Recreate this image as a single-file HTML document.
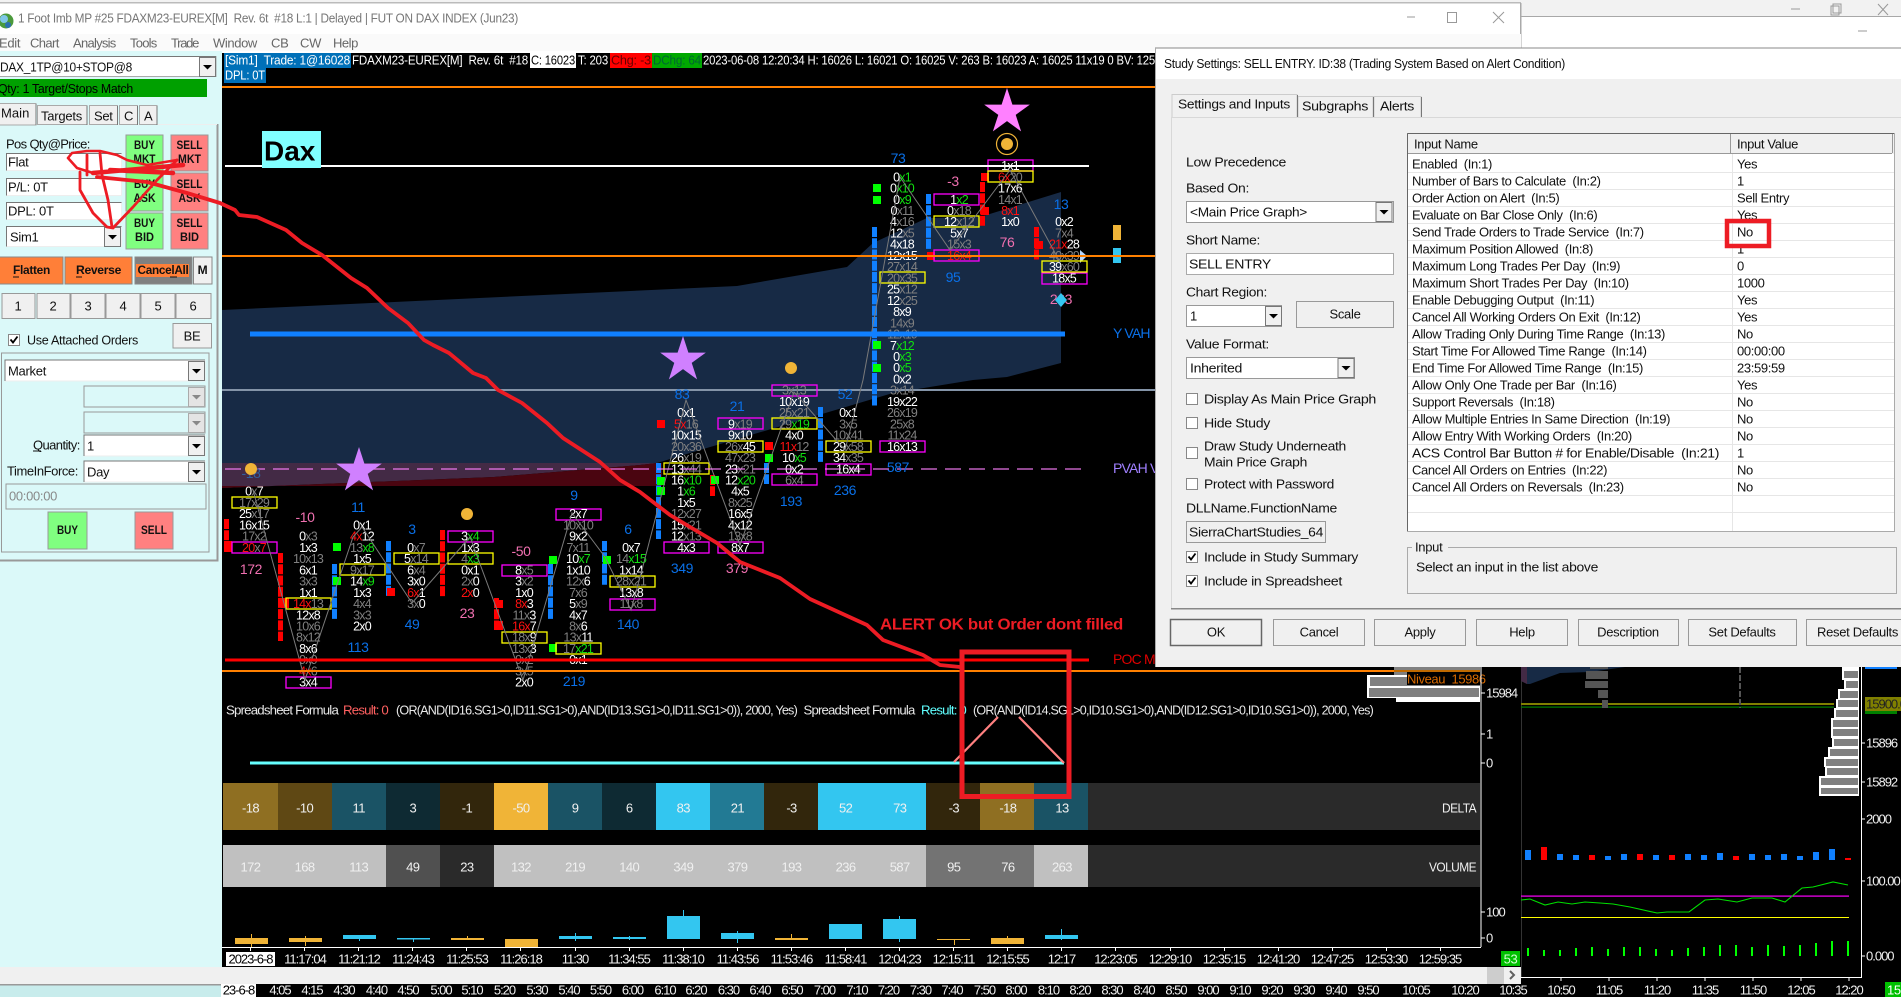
<!DOCTYPE html>
<html><head><meta charset="utf-8"><title>Study Settings</title>
<style>
html,body{margin:0;padding:0;background:#000;width:1901px;height:997px;overflow:hidden}
svg{position:absolute;left:0;top:0;display:block}
text{font-family:"Liberation Sans",Arial,sans-serif;font-size:13px;dominant-baseline:central;fill:#111;letter-spacing:-.3px}
.m{fill:#666}
.c{text-anchor:middle}
.h text{font-size:13px;fill:#fff;letter-spacing:-.2px}
.f text{font-size:12.5px;letter-spacing:-.8px;text-anchor:middle;fill:#fff}
.f text.g,.f tspan.g{fill:#808080}
.f text.r,.f tspan.r{fill:#ff1010}
.f text.n,.f tspan.n{fill:#10e010}
.f tspan.w{fill:#fff}
.b text{font-size:14px;letter-spacing:-.4px;text-anchor:middle;fill:#0a70e8}
.b text.p{fill:#f070b0}
.d text{font-size:13px;letter-spacing:-.6px;text-anchor:middle;fill:#f0f0f0}
.t text{font-size:13px;letter-spacing:-1px;text-anchor:middle;fill:#f0f0f0}
.s text{font-size:13px;letter-spacing:-.8px;fill:#e8e8e8}
.rw text{font-size:13px;letter-spacing:-.35px;fill:#111}
.bb text{font-size:11.5px;font-weight:bold;text-anchor:middle;letter-spacing:0}
</style></head>
<body>
<svg width="1901" height="997" viewBox="0 0 1901 997" xmlns="http://www.w3.org/2000/svg">
<defs>
<g id="ar"><rect x=".5" y=".5" width="16" height="19" fill="#f0f0f0" stroke="#777"/><path d="M4 8h9l-4.500 4.500z" fill="#000"/></g>
<g id="ad"><rect x=".5" y=".5" width="16" height="19" fill="#e4e4e4" stroke="#aaa"/><path d="M4 8h9l-4.500 4.500z" fill="#888"/></g>
<polygon id="st" points="0,-1 .225,-.309 .951,-.309 .363,.118 .588,.809 0,.382 -.588,.809 -.363,.118 -.951,-.309 -.225,-.309"/>
<g id="cb"><rect x=".5" y=".5" width="11" height="11" fill="#fff" stroke="#888"/></g>
<g id="cc"><rect x=".5" y=".5" width="11" height="11" fill="#fff" stroke="#888"/><path d="M2.500 5.500l2.500 3 4.500-6" stroke="#000" stroke-width="1.800" fill="none"/></g>
</defs>

<!-- page base -->
<rect width="1901" height="997" fill="#fff"/>
<rect y="0" width="1901" height="16" fill="#f2f2f2"/>
<rect y="16" x="1521" width="380" height="1" fill="#a8a8a8"/>
<path d="M1791 9h9" stroke="#999"/>
<rect x="1831" y="6" width="8" height="9" fill="none" stroke="#999"/><rect x="1833" y="4" width="8" height="9" fill="none" stroke="#999"/>
<path d="M1878 4l10 11M1888 4l-10 11" stroke="#999"/>
<path d="M1858 31h9" stroke="#999"/>

<!-- main window title -->
<rect x="0" y="3" width="1521" height="48" fill="#fff"/>
<rect x="0" y="2" width="1521" height="1.500" fill="#bbb"/>
<rect x="1520" y="3" width="1.500" height="46" fill="#aaa"/>
<rect y="34" width="1521" height="17" fill="#fafafa"/>
<circle cx="6" cy="21" r="7.500" fill="#4b9a3c"/><circle cx="4" cy="19" r="4" fill="#7fc7e8"/><circle cx="8" cy="25" r="3" fill="#2b6fb0"/>
<text x="18" y="18" class="m" textLength="500" lengthAdjust="spacingAndGlyphs" style="fill:#777">1 Foot Imb MP #25 FDAXM23-EUREX[M]&nbsp; Rev. 6t&nbsp; #18 L:1 | Delayed | FUT ON DAX INDEX (Jun23)</text>
<g class="m"><text x="-1" y="43" class="m">Edit</text><text x="30" y="43" class="m" textLength="29">Chart</text><text x="73" y="43" class="m" textLength="43">Analysis</text><text x="130" y="43" class="m" textLength="27">Tools</text><text x="171" y="43" class="m" textLength="28">Trade</text><text x="213" y="43" class="m" textLength="44">Window</text><text x="271" y="43" class="m">CB</text><text x="300" y="43" class="m">CW</text><text x="333" y="43" class="m" textLength="25">Help</text></g>
<path d="M1407 17h8" stroke="#999"/><rect x="1447.500" y="12.500" width="9" height="10" fill="none" stroke="#999"/><path d="M1493 12l11 11M1504 12l-11 11" stroke="#999"/>

<!-- chart background -->
<rect x="222" y="53" width="1679" height="944" fill="#000"/>

<!-- value areas -->
<polygon points="222,310 737,286 847,267 873,243 927,218 980,217 993,213 1061,192 1061,363 1007,377 973,380 893,393 700,450 657,463 222,463" fill="#172a45"/>
<polygon points="222,463 657,463 640,465 494,477 222,488" fill="#432a45"/>
<polygon points="222,488 494,477 640,465 657,463 662,463 662,486 222,486" fill="#4a0510"/>

<rect x="222" y="389" width="933" height="2" fill="#8494a8"/>
<g class="s"><text x="1113" y="333" style="font-size:14px;fill:#0a70e8">Y VAH</text><text x="1113" y="468" style="font-size:14px;fill:#a080ff">PVAH V</text><text x="1113" y="659" style="font-size:14px;fill:#e00000">POC Mo</text></g>
<rect x="1113" y="225" width="8" height="15" fill="#f0b437"/><rect x="1113" y="248" width="8" height="15" fill="#33c6f0"/>
<polygon points="1080,250 1080,263 1087,256" fill="#b8d8ff"/>

<!-- profile bars (column markers) -->
<g fill="none" stroke-width="5">
<g stroke="#f00" stroke-dasharray="10 1.230">
<line x1="226.500" y1="519" x2="226.500" y2="552"/><line x1="280.500" y1="553" x2="280.500" y2="641"/><line x1="442.500" y1="530" x2="442.500" y2="597"/><line x1="496.500" y1="598" x2="496.500" y2="630"/><line x1="712.500" y1="475" x2="712.500" y2="496"/><line x1="982.500" y1="182" x2="982.500" y2="226"/><line x1="1036.500" y1="227" x2="1036.500" y2="260"/>
</g>
<g stroke="#1080ff" stroke-dasharray="10 1.230">
<line x1="334.500" y1="564" x2="334.500" y2="619"/><line x1="388.500" y1="541" x2="388.500" y2="597"/><line x1="550.500" y1="564" x2="550.500" y2="619"/><line x1="604.500" y1="541" x2="604.500" y2="585"/><line x1="658.500" y1="463" x2="658.500" y2="539"/><line x1="766.500" y1="463" x2="766.500" y2="484"/><line x1="820.500" y1="407" x2="820.500" y2="462"/><line x1="874.500" y1="227" x2="874.500" y2="406"/><line x1="928.500" y1="194" x2="928.500" y2="249"/>
</g>
</g>
<g fill="#00ff00">
<rect x="333" y="543" width="8" height="8"/><rect x="333" y="577" width="8" height="8"/><rect x="549" y="556" width="8" height="8"/><rect x="549" y="644" width="8" height="8"/><rect x="603" y="556" width="8" height="8"/><rect x="657" y="477" width="8" height="8"/><rect x="657" y="487" width="8" height="8"/><rect x="711" y="476" width="8" height="8"/><rect x="765" y="454" width="8" height="8"/><rect x="873" y="184" width="8" height="8"/><rect x="873" y="196" width="8" height="8"/><rect x="873" y="341" width="8" height="8"/><rect x="873" y="364" width="8" height="8"/>
</g>
<g fill="#f00">
<rect x="224" y="541" width="8" height="11"/><rect x="281" y="598" width="8" height="10"/><rect x="387" y="588" width="8" height="8"/><rect x="494" y="600" width="9" height="8"/><rect x="494" y="621" width="9" height="9"/><rect x="657" y="420" width="8" height="8"/><rect x="765" y="442" width="8" height="8"/><rect x="927" y="252" width="8" height="8"/><rect x="981" y="173" width="8" height="8"/><rect x="981" y="207" width="8" height="8"/><rect x="1035" y="241" width="8" height="8"/>
</g>

<!-- boxes -->
<g fill="none" stroke="#ff00ff" stroke-width="1.300">
<rect x="232" y="542" width="45" height="11"/><rect x="286" y="677" width="45" height="11"/><rect x="448" y="531" width="45" height="11"/><rect x="502" y="565" width="45" height="11"/><rect x="556" y="509" width="45" height="11"/><rect x="610" y="599" width="45" height="11"/><rect x="664" y="542" width="45" height="11"/><rect x="718" y="418" width="45" height="11"/><rect x="718" y="542" width="45" height="11"/><rect x="772" y="385" width="45" height="11"/><rect x="772" y="474" width="45" height="11"/><rect x="826" y="464" width="45" height="11"/><rect x="880" y="441" width="45" height="11"/><rect x="934" y="194" width="45" height="11"/><rect x="934" y="250" width="45" height="11"/><rect x="988" y="160" width="45" height="11"/><rect x="1042" y="273" width="45" height="11"/>
</g>
<g fill="none" stroke="#ffff00" stroke-width="1.300">
<rect x="232" y="497" width="45" height="11"/><rect x="286" y="598" width="45" height="11"/><rect x="340" y="564" width="45" height="11"/><rect x="394" y="553" width="45" height="11"/><rect x="448" y="553" width="45" height="11"/><rect x="502" y="632" width="45" height="11"/><rect x="556" y="643" width="45" height="11"/><rect x="610" y="576" width="45" height="11"/><rect x="664" y="463" width="45" height="11"/><rect x="718" y="441" width="45" height="11"/><rect x="772" y="418" width="45" height="11"/><rect x="826" y="441" width="45" height="11"/><rect x="880" y="272" width="45" height="11"/><rect x="934" y="216" width="45" height="11"/><rect x="988" y="171" width="45" height="11"/><rect x="1042" y="261" width="45" height="11"/>
</g>

<!-- footprint -->
<g class="f">
<g transform="translate(254)"><text y="491.700">0<tspan class="g">x</tspan>7</text><text y="503" class="g">17x29</text><text y="514.200">25<tspan class="g">x17</tspan></text><text y="525.400">16x15</text><text y="536.700" class="g">17x2</text><text y="547.900"><tspan class="r">20</tspan><tspan class="g">x</tspan><tspan class="r">7</tspan></text></g>
<g transform="translate(308)"><text y="536.700">0<tspan class="g">x3</tspan></text><text y="547.900">1x3</text><text y="559.100" class="g">10x13</text><text y="570.400">6x1</text><text y="581.600" class="g">3x3</text><text y="592.800">1x1</text><text y="604"><tspan class="r">14x</tspan><tspan class="g">13</tspan></text><text y="615.300">12x8</text><text y="626.500" class="g">10x6</text><text y="637.700" class="g">8x12</text><text y="649">8x6</text><text y="660.200" class="g">9x9</text><text y="671.400"><tspan class="r">4x</tspan><tspan class="g">6</tspan></text><text y="682.700">3x4</text></g>
<g transform="translate(362)"><text y="525.400">0x1</text><text y="536.700"><tspan class="r">4x</tspan>12</text><text y="547.900" class="g">13<tspan class="n">x8</tspan></text><text y="559.100">1x5</text><text y="570.400" class="g">9x17</text><text y="581.600">14<tspan class="n">x9</tspan></text><text y="592.800">1x3</text><text y="604" class="g">4x4</text><text y="615.300" class="g">3x3</text><text y="626.500">2x0</text></g>
<g transform="translate(416)"><text y="547.900">0<tspan class="g">x7</tspan></text><text y="559.100">5<tspan class="g">x14</tspan></text><text y="570.400">6<tspan class="g">x4</tspan></text><text y="581.600">3x0</text><text y="592.800"><tspan class="r">6x</tspan>1</text><text y="604"><tspan class="g">3x</tspan>0</text></g>
<g transform="translate(470)"><text y="536.700">3<tspan class="n">x4</tspan></text><text y="547.900">1x3</text><text y="559.100" class="g">4<tspan class="n">x3</tspan></text><text y="570.400">0x1</text><text y="581.600"><tspan class="g">2x</tspan>0</text><text y="592.800"><tspan class="r">2x</tspan>0</text></g>
<g transform="translate(524)"><text y="570.400">8<tspan class="g">x5</tspan></text><text y="581.600">3<tspan class="g">x2</tspan></text><text y="592.800">1x0</text><text y="604"><tspan class="r">8x</tspan>3</text><text y="615.300"><tspan class="g">11x</tspan>3</text><text y="626.500"><tspan class="r">16x</tspan>7</text><text y="637.700"><tspan class="g">18x</tspan>9</text><text y="649"><tspan class="g">13x</tspan>3</text><text y="660.200" class="g">9x2</text><text y="671.400" class="g">3x5</text><text y="682.700">2x0</text></g>
<g transform="translate(578)"><text y="514.200">2x7</text><text y="525.400" class="g">10x10</text><text y="536.700">9x2</text><text y="547.900" class="g">7x11</text><text y="559.100">10<tspan class="n">x7</tspan></text><text y="570.400">1x10</text><text y="581.600"><tspan class="g">12x</tspan>6</text><text y="592.800" class="g">7x6</text><text y="604">5<tspan class="g">x9</tspan></text><text y="615.300">4x7</text><text y="626.500"><tspan class="g">8x</tspan>6</text><text y="637.700"><tspan class="g">13x</tspan>11</text><text y="649" class="g">17<tspan class="n">x21</tspan></text><text y="660.200">0x1</text></g>
<g transform="translate(631)"><text y="547.900">0x7</text><text y="559.100" class="g">14<tspan class="n">x15</tspan></text><text y="570.400">1x14</text><text y="581.600" class="g">28x21</text><text y="592.800">13x8</text><text y="604" class="g">11x8</text></g>
<g transform="translate(686)"><text y="413.100">0x1</text><text y="424.400"><tspan class="r">5x</tspan><tspan class="g">16</tspan></text><text y="435.600">10x15</text><text y="446.800" class="g">20x36</text><text y="458.100">26<tspan class="g">x19</tspan></text><text y="469.300">13<tspan class="g">x44</tspan></text><text y="480.500">16<tspan class="n">x10</tspan></text><text y="491.700">1<tspan class="n">x6</tspan></text><text y="503">1x5</text><text y="514.200" class="g">12x27</text><text y="525.400">15<tspan class="g">x21</tspan></text><text y="536.700">12<tspan class="g">x13</tspan></text><text y="547.900">4x3</text></g>
<g transform="translate(740)"><text y="424.400">9<tspan class="g">x19</tspan></text><text y="435.600">9x10</text><text y="446.800"><tspan class="g">26x</tspan>45</text><text y="458.100" class="g">47x23</text><text y="469.300">23<tspan class="g">x21</tspan></text><text y="480.500">12<tspan class="n">x20</tspan></text><text y="491.700">4x5</text><text y="503" class="g">8x25</text><text y="514.200">16x5</text><text y="525.400">4x12</text><text y="536.700" class="g">13x8</text><text y="547.900">8x7</text></g>
<g transform="translate(794)"><text y="390.700" class="g">3x13</text><text y="401.900">10x19</text><text y="413.100" class="g">25x21</text><text y="424.400" class="g">29<tspan class="n">x19</tspan></text><text y="435.600">4x0</text><text y="446.800"><tspan class="r">11x</tspan><tspan class="g">12</tspan></text><text y="458.100">10<tspan class="n">x5</tspan></text><text y="469.300">0x2</text><text y="480.500" class="g">6x4</text></g>
<g transform="translate(848)"><text y="413.100">0x1</text><text y="424.400" class="g">3x5</text><text y="435.600" class="g">10x41</text><text y="446.800">29<tspan class="g">x58</tspan></text><text y="458.100">34<tspan class="g">x35</tspan></text><text y="469.300">16x4</text></g>
<g transform="translate(902)"><text y="177.300">0<tspan class="n">x1</tspan></text><text y="188.500">0<tspan class="n">x10</tspan></text><text y="199.800">0<tspan class="n">x9</tspan></text><text y="211">0<tspan class="g">x11</tspan></text><text y="222.200">4<tspan class="g">x16</tspan></text><text y="233.500">12<tspan class="g">x5</tspan></text><text y="244.700">4x18</text><text y="255.900">12x15</text><text y="267.100" class="g">27x14</text><text y="278.400" class="g">20x35</text><text y="289.600">25<tspan class="g">x12</tspan></text><text y="300.800">12<tspan class="g">x25</tspan></text><text y="312.100">8x9</text><text y="323.300" class="g">14x9</text><text y="334.500" class="g">12x19</text><text y="345.800">7<tspan class="n">x12</tspan></text><text y="357">0<tspan class="n">x3</tspan></text><text y="368.200">0<tspan class="n">x5</tspan></text><text y="379.400">0x2</text><text y="390.700" class="g">3x14</text><text y="401.900">19x22</text><text y="413.100" class="g">26x19</text><text y="424.400" class="g">25x8</text><text y="435.600" class="g">11x24</text><text y="446.800">16x13</text></g>
<g transform="translate(959)"><text y="199.800">1<tspan class="n">x2</tspan></text><text y="211">0<tspan class="g">x18</tspan></text><text y="222.200">12<tspan class="g">x12</tspan></text><text y="233.500">5x7</text><text y="244.700" class="g">15x3</text><text y="255.900" class="r">16x4</text></g>
<g transform="translate(1010)"><text y="166.100">1x1</text><text y="177.300"><tspan class="r">6x</tspan><tspan class="g">20</tspan></text><text y="188.500">17x6</text><text y="199.800" class="g">14x1</text><text y="211" class="r">8x1</text><text y="222.200">1x0</text></g>
<g transform="translate(1064)"><text y="222.200">0x2</text><text y="233.500" class="g">7x4</text><text y="244.700"><tspan class="r">21x</tspan>28</text><text y="255.900" class="g">40x39</text><text y="267.100">39<tspan class="g">x60</tspan></text><text y="278.400">18x5</text></g>
</g>

<!-- zigzag -->
<polyline points="253,490 305,680 353,537 362,527 412,603 470,537 523,680 572,513 605,557 631,610 642,570 686,400 740,545 794,392 845,450 863,380 900,177 950,250 1010,170 1060,262" fill="none" stroke="#7a7a7a"/>

<!-- lines above footprints -->
<rect x="222" y="86" width="933" height="2" fill="#ff8000"/>
<rect x="225" y="165" width="864" height="2" fill="#fff"/>
<rect x="222" y="255" width="933" height="2" fill="#ff8000"/>
<rect x="250" y="331.500" width="815" height="5" fill="#1080ff"/>
<line x1="225" y1="469" x2="1083" y2="469" stroke="#ff80ff" stroke-width="1.200" stroke-dasharray="16 8" opacity=".9"/>
<rect x="225" y="658.500" width="864" height="3" fill="#f00"/>
<rect x="222" y="670" width="1258" height="2" fill="#ff8000"/>

<!-- Dax -->
<rect x="262" y="131" width="59" height="37" fill="#80ffff"/>
<text x="264" y="151" style="font-size:28px;font-weight:bold;fill:#000;letter-spacing:0">Dax</text>

<!-- big numbers -->
<g class="b">
<text x="251" y="473" style="fill:#3060a0">-18</text><text x="251" y="569" class="p">172</text><text x="305" y="517" class="p">-10</text><text x="358" y="507">11</text><text x="358" y="647">113</text><text x="412" y="529">3</text><text x="412" y="624">49</text><text x="467" y="613" class="p">23</text><text x="521" y="551" class="p">-50</text><text x="574" y="495">9</text><text x="574" y="681">219</text><text x="628" y="529">6</text><text x="628" y="624">140</text><text x="682" y="394">83</text><text x="682" y="568">349</text><text x="737" y="406">21</text><text x="737" y="568" class="p">379</text><text x="791" y="501">193</text><text x="845" y="394">52</text><text x="845" y="490">236</text><text x="898" y="158">73</text><text x="898" y="467">587</text><text x="953" y="181" class="p">-3</text><text x="953" y="277">95</text><text x="1007" y="242" class="p">76</text><text x="1061" y="204">13</text><text x="1061" y="299" class="p">263</text><text x="305" y="705" class="p">168</text><text x="521" y="705" class="p">132</text>
</g>

<!-- stars + circles -->
<use href="#st" transform="translate(359,471) scale(24)" fill="#d080ff"/>
<use href="#st" transform="translate(683,360) scale(24)" fill="#d080ff"/>
<use href="#st" transform="translate(1007,112) scale(24)" fill="#ff80ff"/>
<g fill="#f0b437"><circle cx="251" cy="469" r="6"/><circle cx="467" cy="514" r="6"/><circle cx="791" cy="368" r="6"/><circle cx="1007" cy="144" r="6"/></g>
<circle cx="1007" cy="144" r="10.500" fill="none" stroke="#f0b437" stroke-width="1.200"/>
<polygon points="1061,293 1067,300 1061,307 1055,300" fill="#33c6f0"/>

<!-- lower area cover -->
<rect x="222" y="700" width="1259" height="284" fill="#000"/>

<!-- volume profile fragment main chart -->
<rect x="1394" y="667" width="86" height="8" fill="#808080"/>
<rect x="1396" y="696" width="84" height="6" fill="#fff"/>
<rect x="1367" y="675" width="113" height="23" fill="#fff"/>
<rect x="1370" y="677" width="110" height="9" fill="#808080"/>
<rect x="1369" y="688" width="110" height="9" fill="#808080"/>
<rect x="1407" y="672" width="73" height="13" fill="#000"/>
<text x="1407" y="679" style="fill:#d86a00;font-size:13px;letter-spacing:-.4px">Niveau&nbsp; 15986</text>
<rect x="1394" y="670" width="86" height="2" fill="#c06a00"/>

<!-- spreadsheet lines -->
<g class="s">
<text x="226" y="710" textLength="112" lengthAdjust="spacingAndGlyphs">Spreadsheet Formula</text>
<text x="343" y="710" textLength="45" lengthAdjust="spacingAndGlyphs" style="fill:#ff6060">Result: 0</text>
<text x="396" y="710" textLength="401" lengthAdjust="spacingAndGlyphs">(OR(AND(ID16.SG1&gt;0,ID11.SG1&gt;0),AND(ID13.SG1&gt;0,ID11.SG1&gt;0)), 2000, Yes)</text>
<text x="803.500" y="710" textLength="111" lengthAdjust="spacingAndGlyphs">Spreadsheet Formula</text>
<text x="921" y="710" textLength="45" lengthAdjust="spacingAndGlyphs" style="fill:#60ffff">Result: 0</text>
<text x="973" y="710" textLength="400" lengthAdjust="spacingAndGlyphs">(OR(AND(ID14.SG1&gt;0,ID10.SG1&gt;0),AND(ID12.SG1&gt;0,ID10.SG1&gt;0)), 2000, Yes)</text>
</g>
<rect x="250" y="761.500" width="814" height="3" fill="#66ffff"/>
<path d="M954 762L998 717M1019 717L1064 763" stroke="#ff8080" stroke-width="2.200" fill="none"/>

<!-- delta -->
<rect x="223" y="783" width="1257" height="47" fill="#2a2a2a"/>
<rect x="223" y="783" width="55" height="47" fill="#8f6f22"/><rect x="278" y="783" width="54" height="47" fill="#5f4814"/><rect x="332" y="783" width="54" height="47" fill="#1a5365"/><rect x="386" y="783" width="54" height="47" fill="#0e2a33"/><rect x="440" y="783" width="54" height="47" fill="#32260c"/><rect x="494" y="783" width="54" height="47" fill="#f0b437"/><rect x="548" y="783" width="54" height="47" fill="#1a5365"/><rect x="602" y="783" width="54" height="47" fill="#0e2a33"/><rect x="656" y="783" width="54" height="47" fill="#33c6f0"/><rect x="710" y="783" width="54" height="47" fill="#227a94"/><rect x="764" y="783" width="54" height="47" fill="#32260c"/><rect x="818" y="783" width="108" height="47" fill="#33c6f0"/><rect x="926" y="783" width="54" height="47" fill="#32260c"/><rect x="980" y="783" width="54" height="47" fill="#8f6f22"/><rect x="1034" y="783" width="54" height="47" fill="#1a5365"/>
<g class="d"><text x="250.500" y="808">-18</text><text x="304.600" y="808">-10</text><text x="358.700" y="808">11</text><text x="412.800" y="808">3</text><text x="466.900" y="808">-1</text><text x="521" y="808">-50</text><text x="575.100" y="808">9</text><text x="629.200" y="808">6</text><text x="683.300" y="808">83</text><text x="737.400" y="808">21</text><text x="791.500" y="808">-3</text><text x="845.600" y="808">52</text><text x="899.700" y="808">73</text><text x="953.800" y="808">-3</text><text x="1007.900" y="808">-18</text><text x="1062" y="808">13</text><text x="1442" y="808" style="text-anchor:start" textLength="34" lengthAdjust="spacingAndGlyphs">DELTA</text></g>

<!-- volume -->
<rect x="223" y="845" width="1257" height="42" fill="#2a2a2a"/>
<rect x="223" y="845" width="163" height="42" fill="#c0c0c0"/><rect x="386" y="845" width="54" height="42" fill="#505050"/><rect x="494" y="845" width="432" height="42" fill="#c0c0c0"/><rect x="926" y="845" width="108" height="42" fill="#737373"/><rect x="1034" y="845" width="54" height="42" fill="#c0c0c0"/>
<g class="d"><text x="250.500" y="867">172</text><text x="304.600" y="867">168</text><text x="358.700" y="867">113</text><text x="412.800" y="867">49</text><text x="466.900" y="867">23</text><text x="521" y="867">132</text><text x="575.100" y="867">219</text><text x="629.200" y="867">140</text><text x="683.300" y="867">349</text><text x="737.400" y="867">379</text><text x="791.500" y="867">193</text><text x="845.600" y="867">236</text><text x="899.700" y="867">587</text><text x="953.800" y="867">95</text><text x="1007.900" y="867">76</text><text x="1062" y="867">263</text><text x="1429" y="867" style="text-anchor:start" textLength="47" lengthAdjust="spacingAndGlyphs">VOLUME</text></g>

<!-- candles -->
<g stroke="#f0b437" stroke-width="1"><path d="M251.500 934V948M305.500 936V946M467.500 936V940M521.500 939V947M791.500 934V940M954.500 939V945M1007.500 936V944"/></g>
<g stroke="#33c6f0" stroke-width="1"><path d="M359.500 935V941M413.500 938V942M575.500 933V941M629.500 936V940M683.500 910V939M737.500 931V943M899.500 916V942M1061.500 929V940"/></g>
<g fill="#f0b437"><rect x="235" y="938" width="33" height="6"/><rect x="289" y="938" width="33" height="4"/><rect x="451" y="938" width="33" height="2"/><rect x="505" y="939" width="33" height="8"/><rect x="775" y="938" width="33" height="2"/><rect x="937" y="939" width="33" height="1"/><rect x="991" y="938" width="33" height="6"/></g>
<g fill="#33c6f0"><rect x="343" y="935" width="33" height="4"/><rect x="397" y="938" width="33" height="1.500"/><rect x="559" y="936" width="33" height="3"/><rect x="613" y="937" width="33" height="2"/><rect x="667" y="916" width="33" height="23"/><rect x="721" y="933" width="33" height="6"/><rect x="829" y="924" width="33" height="15"/><rect x="883" y="919" width="33" height="20"/><rect x="1045" y="935" width="33" height="4"/></g>

<!-- axis main -->
<rect x="221" y="947" width="1260" height="1" fill="#fff"/>
<path d="M1481 667V947" stroke="#fff"/>
<path d="M250.500 947v4M304.500 947v4M358.500 947v4M412.500 947v4M466.500 947v4M520.500 947v4M575.500 947v4M629.500 947v4M683.500 947v4M737.500 947v4M791.500 947v4M845.500 947v4M899.500 947v4M953.500 947v4M1007.500 947v4M1061.500 947v4M1115.500 947v4M1170.500 947v4M1224.500 947v4M1278.500 947v4M1332.500 947v4M1386.500 947v4M1440.500 947v4" stroke="#fff"/>
<rect x="226" y="952" width="49" height="14" fill="#fff"/>
<g class="t"><text x="250.500" y="959" style="fill:#000">2023-6-8</text><text x="305" y="959">11:17:04</text><text x="359" y="959">11:21:12</text><text x="413" y="959">11:24:43</text><text x="467" y="959">11:25:53</text><text x="521" y="959">11:26:18</text><text x="575" y="959">11:30</text><text x="629" y="959">11:34:55</text><text x="683" y="959">11:38:10</text><text x="737.500" y="959">11:43:56</text><text x="791.500" y="959">11:53:46</text><text x="845.500" y="959">11:58:41</text><text x="899.500" y="959">12:04:23</text><text x="953.500" y="959">12:15:11</text><text x="1007.500" y="959">12:15:55</text><text x="1061.500" y="959">12:17</text><text x="1115.500" y="959">12:23:05</text><text x="1170" y="959">12:29:10</text><text x="1224" y="959">12:35:15</text><text x="1278" y="959">12:41:20</text><text x="1332" y="959">12:47:25</text><text x="1386" y="959">12:53:30</text><text x="1440" y="959">12:59:35</text></g>

<!-- main price scale -->
<path d="M1481 693h4M1481 734h4M1481 763h4M1481 912h4M1481 938h4" stroke="#fff"/>
<g class="t" style="text-anchor:start"><text x="1486" y="693" style="text-anchor:start">15984</text><text x="1486" y="734" style="text-anchor:start">1</text><text x="1486" y="763" style="text-anchor:start">0</text><text x="1486" y="912" style="text-anchor:start">100</text><text x="1486" y="938" style="text-anchor:start">0</text></g>
<rect x="1501" y="951" width="19" height="15" fill="#00c000"/>
<text x="1510.500" y="959" class="c" style="fill:#d0ffd0">53</text>

<!-- right chart -->
<path d="M1521.500 667V977" stroke="#333"/>
<polygon points="1521,667 1625,667 1590,672 1560,673 1530,684 1527,684 1521,681" fill="#172a45"/>
<polygon points="1521,667 1527,667 1527,684 1521,681" fill="#432a45"/>
<rect x="1521" y="703" width="313" height="2" fill="#808000"/><rect x="1521" y="706.500" width="313" height="1.200" fill="#008000"/>
<g fill="#555"><rect x="1590" y="667" width="18" height="2"/><rect x="1586" y="671" width="22" height="8"/><rect x="1585" y="681" width="23" height="7"/><rect x="1598" y="690" width="10" height="8"/><rect x="1602" y="700" width="6" height="8"/></g>
<line x1="1740" y1="667" x2="1740" y2="708" stroke="#555" stroke-width="2" stroke-dasharray="6 2"/>
<!-- right profile -->
<g fill="#fff"><rect x="1842" y="667" width="17" height="13"/><rect x="1844" y="680" width="15" height="9"/><rect x="1838" y="689" width="21" height="10"/><rect x="1836" y="699" width="23" height="9"/><rect x="1834" y="708" width="25" height="10"/><rect x="1831" y="718" width="28" height="20"/><rect x="1832" y="738" width="27" height="10"/><rect x="1828" y="747" width="31" height="10"/><rect x="1824" y="757" width="35" height="10"/><rect x="1825" y="766" width="34" height="10"/><rect x="1819" y="776" width="40" height="20"/></g>
<g fill="#808080"><rect x="1844" y="671" width="14" height="7"/><rect x="1846" y="681" width="12" height="7"/><rect x="1840" y="691" width="18" height="7"/><rect x="1838" y="700" width="20" height="7"/><rect x="1836" y="710" width="22" height="7"/><rect x="1833" y="720" width="25" height="7"/><rect x="1833" y="729" width="25" height="7"/><rect x="1834" y="739" width="24" height="7"/><rect x="1830" y="749" width="28" height="7"/><rect x="1826" y="759" width="32" height="7"/><rect x="1827" y="768" width="31" height="7"/><rect x="1821" y="778" width="37" height="7"/><rect x="1821" y="788" width="37" height="6"/></g>
<!-- histogram -->
<g fill="#1080ff"><rect x="1525" y="850" width="6" height="10"/><rect x="1557" y="854" width="6" height="6"/><rect x="1573" y="855" width="6" height="5"/><rect x="1605" y="856" width="6" height="4"/><rect x="1621" y="854" width="6" height="6"/><rect x="1653" y="855" width="6" height="5"/><rect x="1685" y="854" width="6" height="6"/><rect x="1701" y="855" width="6" height="5"/><rect x="1717" y="853" width="6" height="7"/><rect x="1749" y="854" width="6" height="6"/><rect x="1765" y="855" width="6" height="5"/><rect x="1781" y="854" width="6" height="6"/><rect x="1797" y="856" width="6" height="4"/><rect x="1813" y="852" width="6" height="8"/><rect x="1829" y="849" width="6" height="11"/></g>
<g fill="#f00"><rect x="1541" y="847" width="6" height="13"/><rect x="1589" y="855" width="6" height="5"/><rect x="1637" y="854" width="6" height="6"/><rect x="1669" y="855" width="6" height="5"/><rect x="1733" y="856" width="6" height="4"/><rect x="1845" y="858" width="6" height="2"/></g>
<rect x="1521" y="895.500" width="328" height="1.200" fill="#ff00ff"/>
<rect x="1521" y="917" width="328" height="1" fill="#ffff00"/>
<polyline points="1521,900 1530,899 1545,905 1558,902 1572,904 1585,902 1600,903 1613,904 1630,907 1657,913 1667,912 1689,912 1705,900 1718,899 1737,902 1752,898 1772,898 1785,902 1802,888 1813,887 1833,882 1848,885" fill="none" stroke="#00e000" stroke-width="1.100"/>
<g fill="#00ff00"><rect x="1527" y="948" width="2" height="8"/><rect x="1543" y="950" width="2" height="6"/><rect x="1559" y="950" width="2" height="6"/><rect x="1575" y="948" width="2" height="8"/><rect x="1591" y="947" width="2" height="9"/><rect x="1607" y="949" width="2" height="7"/><rect x="1623" y="947" width="2" height="9"/><rect x="1639" y="947" width="2" height="9"/><rect x="1655" y="949" width="2" height="7"/><rect x="1671" y="950" width="2" height="6"/><rect x="1687" y="948" width="2" height="8"/><rect x="1703" y="947" width="2" height="9"/><rect x="1719" y="945" width="2" height="11"/><rect x="1735" y="945" width="2" height="11"/><rect x="1751" y="947" width="2" height="9"/><rect x="1767" y="945" width="2" height="11"/><rect x="1783" y="946" width="2" height="10"/><rect x="1799" y="945" width="2" height="11"/><rect x="1815" y="943" width="2" height="13"/><rect x="1831" y="941" width="2" height="15"/><rect x="1847" y="941" width="2" height="15"/></g>
<path d="M1521 977.500H1861.500V667" stroke="#fff" fill="none"/>
<path d="M1861 743h4M1861 782h4M1861 819h4M1861 881h4M1861 956h4M1561 977v4M1609 977v4M1657 977v4M1705 977v4M1753 977v4M1801 977v4M1849 977v4" stroke="#fff"/>
<rect x="1865" y="667" width="32" height="2" fill="#1080ff"/>
<rect x="1865" y="697" width="32" height="17" fill="#008000"/><rect x="1865" y="697" width="36" height="14" fill="#808000"/>
<g class="t"><text x="1866" y="704" style="text-anchor:start;fill:#222">15900.0</text><text x="1866" y="743" style="text-anchor:start">15896</text><text x="1866" y="782" style="text-anchor:start">15892</text><text x="1866" y="819" style="text-anchor:start">2000</text><text x="1866" y="881" style="text-anchor:start">100.00</text><text x="1866" y="956" style="text-anchor:start">0.000</text></g>

<!-- scrollbar band -->
<rect x="0" y="967" width="1521" height="17" fill="#f0f0f0"/>
<rect x="1487" y="967" width="17" height="17" fill="#cdcdcd"/>
<path d="M1510 971l4 4-4 4" stroke="#606060" stroke-width="2" fill="none"/>

<!-- bottom axis -->
<rect x="221" y="984" width="35" height="13" fill="#fff"/>
<g class="t"><text x="238.500" y="990" style="fill:#000">23-6-8</text><text x="280" y="990">4:05</text><text x="312" y="990">4:15</text><text x="344" y="990">4:30</text><text x="376.500" y="990">4:40</text><text x="408" y="990">4:50</text><text x="441" y="990">5:00</text><text x="472" y="990">5:10</text><text x="504.500" y="990">5:20</text><text x="537" y="990">5:30</text><text x="569" y="990">5:40</text><text x="600.500" y="990">5:50</text><text x="632.500" y="990">6:00</text><text x="665" y="990">6:10</text><text x="696" y="990">6:20</text><text x="728.500" y="990">6:30</text><text x="760" y="990">6:40</text><text x="792" y="990">6:50</text><text x="824.500" y="990">7:00</text><text x="857" y="990">7:10</text><text x="888.500" y="990">7:20</text><text x="920.500" y="990">7:30</text><text x="952" y="990">7:40</text><text x="984.500" y="990">7:50</text><text x="1016" y="990">8:00</text><text x="1048.500" y="990">8:10</text><text x="1080" y="990">8:20</text><text x="1112" y="990">8:30</text><text x="1144" y="990">8:40</text><text x="1176" y="990">8:50</text><text x="1208" y="990">9:00</text><text x="1240" y="990">9:10</text><text x="1272" y="990">9:20</text><text x="1304" y="990">9:30</text><text x="1336" y="990">9:40</text><text x="1368" y="990">9:50</text><text x="1416" y="990">10:05</text><text x="1465" y="990">10:20</text><text x="1513" y="990">10:35</text><text x="1561" y="990">10:50</text><text x="1609" y="990">11:05</text><text x="1657" y="990">11:20</text><text x="1705" y="990">11:35</text><text x="1753" y="990">11:50</text><text x="1801" y="990">12:05</text><text x="1849" y="990">12:20</text></g>
<rect x="1885" y="982" width="16" height="15" fill="#00c000"/><text x="1887" y="990" style="fill:#fff">15</text>

<!-- chart header -->
<rect x="222" y="53" width="1000" height="16" fill="#000"/>
<rect x="224" y="53" width="127" height="15" fill="#0070b8"/>
<rect x="530" y="53" width="46" height="15" fill="#fff"/>
<rect x="610" y="53" width="42" height="15" fill="#f00"/>
<rect x="652" y="53" width="50" height="15" fill="#00a800"/>
<rect x="224" y="68" width="42" height="15" fill="#0070b8"/>
<g class="h"><text x="225" y="60" textLength="125" lengthAdjust="spacingAndGlyphs">[Sim1]&nbsp; Trade: 1@16028</text><text x="352" y="60" textLength="176" lengthAdjust="spacingAndGlyphs">FDAXM23-EUREX[M]&nbsp; Rev. 6t&nbsp; #18</text><text x="531" y="60" style="fill:#000" textLength="44" lengthAdjust="spacingAndGlyphs">C: 16023</text><text x="578" y="60" textLength="30" lengthAdjust="spacingAndGlyphs">T: 203</text><text x="611" y="60" style="fill:#600" textLength="40" lengthAdjust="spacingAndGlyphs">Chg: -3</text><text x="653" y="60" style="fill:#063" textLength="48" lengthAdjust="spacingAndGlyphs">DChg: 64</text><text x="703" y="60" textLength="452" lengthAdjust="spacingAndGlyphs">2023-06-08 12:20:34 H: 16026 L: 16021 O: 16025 V: 263 B: 16023 A: 16025 11x19 0 BV: 125</text><text x="225" y="75" textLength="40" lengthAdjust="spacingAndGlyphs">DPL: 0T</text></g>

<!-- left panel -->
<rect x="0" y="51" width="222" height="916" fill="#dbf9f9"/>
<rect x="0" y="984" width="221" height="13" fill="#c8ecec"/>
<rect x="0" y="984" width="221" height="1.500" fill="#999"/>
<path d="M217.500 124V560.500H0" stroke="#999" stroke-width="2" fill="none"/>
<path d="M0 124.500H217" stroke="#eee"/>
<rect x="-2" y="56.500" width="218" height="20" fill="#fff" stroke="#aaa"/>
<path d="M-2 76.500V56.500H216" stroke="#777" fill="none"/>
<use href="#ar" x="199" y="57"/>
<text x="0" y="67" textLength="132" lengthAdjust="spacingAndGlyphs">DAX_1TP@10+STOP@8</text>
<rect x="0" y="79" width="207" height="18" fill="#00a000"/>
<text x="-2" y="88.500" textLength="135" lengthAdjust="spacingAndGlyphs" style="fill:#000">Qty: 1 Target/Stops Match</text>
<g fill="#f0f0f0" stroke="#aaa">
<rect x="-1" y="103.500" width="37" height="21.500"/><rect x="37.500" y="105.500" width="49.500" height="19"/><rect x="89.500" y="105.500" width="28" height="19"/><rect x="119.500" y="105.500" width="18" height="19"/><rect x="139.500" y="105.500" width="17.500" height="19"/></g>
<path d="M36 104V125M87 106V125M117.500 106V125M137.500 106V125M157 106V125" stroke="#777"/>
<text x="1" y="113" textLength="28">Main</text><text x="41" y="116" textLength="41">Targets</text><text x="94" y="116">Set</text><text x="124" y="116">C</text><text x="144" y="116">A</text>
<text x="6" y="144" textLength="84">Pos Qty@Price:</text>
<g fill="#fff" stroke="#eee"><rect x="6.500" y="153.500" width="115" height="17"/><rect x="6.500" y="178.500" width="115" height="17"/><rect x="6.500" y="202.500" width="115" height="17"/><rect x="6.500" y="226.500" width="115" height="20"/></g>
<path d="M6.500 170.500V153.500H121.500M6.500 195.500V178.500H121.500M6.500 219.500V202.500H121.500M6.500 246.500V226.500H121.500" stroke="#777" fill="none"/>
<text x="8" y="162">Flat</text><text x="8" y="187">P/L: 0T</text><text x="8" y="211">DPL: 0T</text><text x="10" y="237">Sim1</text>
<use href="#ar" x="104" y="227"/>
<g stroke="#999"><g fill="#80ff80"><rect x="126" y="135" width="37" height="36"/><rect x="126" y="173" width="37" height="38"/><rect x="126" y="213" width="37" height="36"/></g><g fill="#ff8080"><rect x="171" y="135" width="37" height="36"/><rect x="171" y="173" width="37" height="38"/><rect x="171" y="213" width="37" height="36"/></g></g>
<g class="bb">
<text x="144.500" y="146" textLength="21" lengthAdjust="spacingAndGlyphs">BUY</text><text x="144.500" y="160" textLength="22" lengthAdjust="spacingAndGlyphs">MKT</text><text x="144.500" y="185" textLength="21" lengthAdjust="spacingAndGlyphs">BUY</text><text x="144.500" y="199" textLength="22" lengthAdjust="spacingAndGlyphs">ASK</text><text x="144.500" y="224" textLength="21" lengthAdjust="spacingAndGlyphs">BUY</text><text x="144.500" y="238" textLength="19" lengthAdjust="spacingAndGlyphs">BID</text>
<text x="189.500" y="146" textLength="26" lengthAdjust="spacingAndGlyphs">SELL</text><text x="189.500" y="160" textLength="23" lengthAdjust="spacingAndGlyphs">MKT</text><text x="189.500" y="185" textLength="26" lengthAdjust="spacingAndGlyphs">SELL</text><text x="189.500" y="199" textLength="22" lengthAdjust="spacingAndGlyphs">ASK</text><text x="189.500" y="224" textLength="26" lengthAdjust="spacingAndGlyphs">SELL</text><text x="189.500" y="238" textLength="19" lengthAdjust="spacingAndGlyphs">BID</text></g>
<g stroke="#888"><rect x="-1" y="257" width="64" height="27" fill="#ff7f38"/><rect x="65" y="257" width="67" height="27" fill="#ff7f38"/><rect x="135" y="257" width="57" height="27" fill="#808080"/><rect x="193.500" y="257" width="18.500" height="27" fill="#f0f0f0"/></g>
<rect x="136" y="264" width="53" height="13" fill="#ff7f38"/>
<text x="31.500" y="270" textLength="37" lengthAdjust="spacingAndGlyphs" class="c" style="font-size:12px;font-weight:bold">Flatten</text><text x="98.500" y="270" textLength="45" lengthAdjust="spacingAndGlyphs" class="c" style="font-size:12px;font-weight:bold">Reverse</text><text x="163" y="270" textLength="51" lengthAdjust="spacingAndGlyphs" class="c" style="font-size:12px;font-weight:bold">CancelAll</text><text x="202.500" y="270" class="c" style="font-size:12px;font-weight:bold">M</text>
<path d="M13 277h6M76 277h6M170 277h7" stroke="#111"/>
<g fill="#f0f0f0" stroke="#999"><rect x="2" y="293.500" width="33" height="25"/><rect x="37" y="293.500" width="33" height="25"/><rect x="71" y="293.500" width="34" height="25"/><rect x="106" y="293.500" width="34" height="25"/><rect x="141" y="293.500" width="34" height="25"/><rect x="176" y="293.500" width="35" height="25"/></g>
<text x="18" y="306" class="c">1</text><text x="53" y="306" class="c">2</text><text x="88" y="306" class="c">3</text><text x="123" y="306" class="c">4</text><text x="158" y="306" class="c">5</text><text x="193" y="306" class="c">6</text>
<use href="#cc" x="8" y="334"/>
<text x="27" y="340" textLength="111" lengthAdjust="spacingAndGlyphs">Use Attached Orders</text>
<rect x="173" y="323.500" width="38.500" height="24.500" fill="#f0f0f0" stroke="#999"/><text x="192" y="336" class="c">BE</text>
<rect x="1.500" y="353" width="207.500" height="199" fill="none" stroke="#999"/>
<g fill="#fff" stroke="#eee"><rect x="5" y="360" width="200" height="21"/><rect x="84" y="435" width="121" height="21"/><rect x="84" y="461" width="121" height="21"/></g>
<path d="M5 381V360H205M84 456V435H205M84 482V461H205" stroke="#777" fill="none"/>
<g fill="#dbf9f9" stroke="#999"><rect x="84" y="386" width="121" height="21"/><rect x="84" y="412" width="121" height="21"/><rect x="6" y="484" width="200" height="25"/></g>
<use href="#ar" x="188" y="361"/><use href="#ad" x="188" y="387"/><use href="#ad" x="188" y="413"/><use href="#ar" x="188" y="436"/><use href="#ar" x="188" y="462"/>
<text x="8" y="371" textLength="38">Market</text><text x="33" y="445" textLength="47">Quantity:</text><text x="7" y="471" textLength="71">TimeInForce:</text><text x="87" y="446">1</text><text x="87" y="472">Day</text><text x="9" y="496" style="fill:#888" textLength="48" lengthAdjust="spacingAndGlyphs">00:00:00</text>
<path d="M33 451h8" stroke="#111"/>
<rect x="48" y="512" width="39" height="37" fill="#80ff80" stroke="#999"/><rect x="135" y="512" width="38" height="37" fill="#ff8080" stroke="#999"/>
<g class="bb"><text x="67.500" y="531" textLength="21" lengthAdjust="spacingAndGlyphs">BUY</text><text x="154" y="531" textLength="26" lengthAdjust="spacingAndGlyphs">SELL</text></g>

<!-- dialog -->
<rect x="1155" y="48" width="746" height="619" fill="#f0f0f0"/>
<rect x="1155" y="48" width="746" height="31" fill="#fff"/>
<rect x="1155" y="47.500" width="746" height="1" fill="#888"/>
<rect x="1155" y="48" width="1" height="619" fill="#aaa"/>
<text x="1164" y="64" textLength="401" lengthAdjust="spacingAndGlyphs" style="font-size:12.500px">Study Settings: SELL ENTRY. ID:38 (Trading System Based on Alert Condition)</text>
<!-- tabs -->
<path d="M1171.500 608V117.500H1901" fill="none" stroke="#d8d8d8"/>
<rect x="1171" y="608" width="730" height="1.500" fill="#888"/>
<path d="M1172 117V94.500H1297V117" fill="#f0f0f0" stroke="#ccc"/>
<path d="M1298 117V96.500H1373V117M1374 117V96.500H1421V117" fill="#f0f0f0" stroke="#ccc"/>
<path d="M1297.500 95V117M1373.500 97V117M1421.500 97V117" stroke="#777"/>
<text x="1178" y="104" textLength="112" lengthAdjust="spacingAndGlyphs">Settings and Inputs</text><text x="1302" y="106" textLength="66" lengthAdjust="spacingAndGlyphs">Subgraphs</text><text x="1380" y="106" textLength="34" lengthAdjust="spacingAndGlyphs">Alerts</text>
<!-- left column -->
<text x="1186" y="162" textLength="100" lengthAdjust="spacingAndGlyphs">Low Precedence</text>
<text x="1186" y="188" textLength="63" lengthAdjust="spacingAndGlyphs">Based On:</text>
<rect x="1186.500" y="201.500" width="207" height="21" fill="#fff" stroke="#999"/><use href="#ar" x="1375.500" y="202"/>
<text x="1190" y="212" textLength="117" lengthAdjust="spacingAndGlyphs">&lt;Main Price Graph&gt;</text>
<text x="1186" y="240" textLength="74" lengthAdjust="spacingAndGlyphs">Short Name:</text>
<rect x="1186.500" y="253.500" width="207" height="21" fill="#fff" stroke="#aaa"/>
<text x="1189" y="264" textLength="82" lengthAdjust="spacingAndGlyphs">SELL ENTRY</text>
<text x="1186" y="292" textLength="81" lengthAdjust="spacingAndGlyphs">Chart Region:</text>
<rect x="1186.500" y="305.500" width="95" height="21" fill="#fff" stroke="#999"/><use href="#ar" x="1265" y="306"/>
<text x="1190" y="316">1</text>
<rect x="1296.500" y="301.500" width="97" height="26" fill="#f0f0f0" stroke="#999"/><text x="1345" y="314" class="c">Scale</text>
<text x="1186" y="344" textLength="83" lengthAdjust="spacingAndGlyphs">Value Format:</text>
<rect x="1186.500" y="357.500" width="168" height="21" fill="#fff" stroke="#999"/><use href="#ar" x="1337.500" y="358"/>
<text x="1190" y="368" textLength="52" lengthAdjust="spacingAndGlyphs">Inherited</text>
<use href="#cb" x="1186" y="393"/><text x="1204" y="399" textLength="172" lengthAdjust="spacingAndGlyphs">Display As Main Price Graph</text>
<use href="#cb" x="1186" y="417"/><text x="1204" y="423" textLength="66" lengthAdjust="spacingAndGlyphs">Hide Study</text>
<use href="#cb" x="1186" y="447"/><text x="1204" y="446" textLength="142" lengthAdjust="spacingAndGlyphs">Draw Study Underneath</text><text x="1204" y="462" textLength="103" lengthAdjust="spacingAndGlyphs">Main Price Graph</text>
<use href="#cb" x="1186" y="478"/><text x="1204" y="484" textLength="130" lengthAdjust="spacingAndGlyphs">Protect with Password</text>
<text x="1186" y="508" textLength="151" lengthAdjust="spacingAndGlyphs">DLLName.FunctionName</text>
<rect x="1186.500" y="521.500" width="139" height="21" fill="#f0f0f0" stroke="#999"/>
<text x="1189" y="532" textLength="134" lengthAdjust="spacingAndGlyphs">SierraChartStudies_64</text>
<use href="#cc" x="1186" y="551"/><text x="1204" y="557" textLength="154" lengthAdjust="spacingAndGlyphs">Include in Study Summary</text>
<use href="#cc" x="1186" y="575"/><text x="1204" y="581" textLength="138" lengthAdjust="spacingAndGlyphs">Include in Spreadsheet</text>
<!-- grid -->
<rect x="1407.500" y="133.500" width="487" height="398" fill="#fff" stroke="#aaa"/>
<path d="M1407.500 133.500H1894M1407.500 133.500V531" stroke="#666" fill="none"/>
<rect x="1408" y="134" width="486" height="20" fill="#f0f0f0"/>
<path d="M1408 153.500H1892M1730.500 134V153M1892.500 134V153" stroke="#999"/>
<g stroke="#e6e6e6"><path d="M1408 172.500H1894M1408 189.500H1894M1408 206.500H1894M1408 223.500H1894M1408 240.500H1894M1408 257.500H1894M1408 274.500H1894M1408 291.500H1894M1408 308.500H1894M1408 325.500H1894M1408 342.500H1894M1408 359.500H1894M1408 376.500H1894M1408 393.500H1894M1408 410.500H1894M1408 427.500H1894M1408 444.500H1894M1408 461.500H1894M1408 478.500H1894M1408 495.500H1894M1408 512.500H1894M1732.500 154V531"/></g>
<g class="rw">
<text x="1414" y="144">Input Name</text><text x="1737" y="144">Input Value</text>
<text x="1412" y="164">Enabled&nbsp;&nbsp;(In:1)</text><text x="1737" y="164">Yes</text>
<text x="1412" y="181">Number of Bars to Calculate&nbsp;&nbsp;(In:2)</text><text x="1737" y="181">1</text>
<text x="1412" y="198">Order Action on Alert&nbsp;&nbsp;(In:5)</text><text x="1737" y="198">Sell Entry</text>
<text x="1412" y="215">Evaluate on Bar Close Only&nbsp;&nbsp;(In:6)</text><text x="1737" y="215">Yes</text>
<text x="1412" y="232">Send Trade Orders to Trade Service&nbsp;&nbsp;(In:7)</text><text x="1737" y="232">No</text>
<text x="1412" y="249">Maximum Position Allowed&nbsp;&nbsp;(In:8)</text><text x="1737" y="249">1</text>
<text x="1412" y="266">Maximum Long Trades Per Day&nbsp;&nbsp;(In:9)</text><text x="1737" y="266">0</text>
<text x="1412" y="283">Maximum Short Trades Per Day&nbsp;&nbsp;(In:10)</text><text x="1737" y="283">1000</text>
<text x="1412" y="300">Enable Debugging Output&nbsp;&nbsp;(In:11)</text><text x="1737" y="300">Yes</text>
<text x="1412" y="317">Cancel All Working Orders On Exit&nbsp;&nbsp;(In:12)</text><text x="1737" y="317">Yes</text>
<text x="1412" y="334">Allow Trading Only During Time Range&nbsp;&nbsp;(In:13)</text><text x="1737" y="334">No</text>
<text x="1412" y="351">Start Time For Allowed Time Range&nbsp;&nbsp;(In:14)</text><text x="1737" y="351">00:00:00</text>
<text x="1412" y="368">End Time For Allowed Time Range&nbsp;&nbsp;(In:15)</text><text x="1737" y="368">23:59:59</text>
<text x="1412" y="385">Allow Only One Trade per Bar&nbsp;&nbsp;(In:16)</text><text x="1737" y="385">Yes</text>
<text x="1412" y="402">Support Reversals&nbsp;&nbsp;(In:18)</text><text x="1737" y="402">No</text>
<text x="1412" y="419">Allow Multiple Entries In Same Direction&nbsp;&nbsp;(In:19)</text><text x="1737" y="419">No</text>
<text x="1412" y="436">Allow Entry With Working Orders&nbsp;&nbsp;(In:20)</text><text x="1737" y="436">No</text>
<text x="1412" y="453" textLength="307" lengthAdjust="spacingAndGlyphs">ACS Control Bar Button # for Enable/Disable&nbsp;&nbsp;(In:21)</text><text x="1737" y="453">1</text>
<text x="1412" y="470">Cancel All Orders on Entries&nbsp;&nbsp;(In:22)</text><text x="1737" y="470">No</text>
<text x="1412" y="487">Cancel All Orders on Reversals&nbsp;&nbsp;(In:23)</text><text x="1737" y="487">No</text>
</g>
<rect x="1727" y="221" width="42" height="25" fill="none" stroke="#ed1c24" stroke-width="4.500"/>
<!-- input group -->
<rect x="1407.500" y="547.500" width="489" height="46" fill="none" stroke="#aaa"/>
<rect x="1412" y="540" width="36" height="14" fill="#f0f0f0"/>
<text x="1415" y="547">Input</text>
<text x="1416" y="567" textLength="182" lengthAdjust="spacingAndGlyphs">Select an input in the list above</text>
<!-- buttons -->
<g fill="#f0f0f0" stroke="#999"><rect x="1273.500" y="619.500" width="91" height="26"/><rect x="1374.500" y="619.500" width="91" height="26"/><rect x="1476.500" y="619.500" width="91" height="26"/><rect x="1578.500" y="619.500" width="100" height="26"/><rect x="1688.500" y="619.500" width="108" height="26"/><rect x="1806.500" y="619.500" width="110" height="26"/></g>
<rect x="1170.500" y="619.500" width="91" height="26" fill="#f0f0f0" stroke="#666" stroke-width="1.500"/>
<text x="1216" y="632" class="c">OK</text><text x="1319" y="632" class="c">Cancel</text><text x="1420" y="632" class="c">Apply</text><text x="1522" y="632" class="c">Help</text><text x="1628" y="632" class="c">Description</text><text x="1742" y="632" class="c">Set Defaults</text><text x="1817" y="632">Reset Defaults</text>

<!-- annotations -->
<g fill="none" stroke="#ed1c24" stroke-linejoin="round" stroke-linecap="round">
<path d="M68 158L72 153L87 151L100 151L117 155L127 160L147 165L177 160M68 158L77 168L93 173" stroke-width="2.600"/>
<path d="M93 173L183 165M110 170L173 173" stroke-width="4.500"/>
<path d="M87 155L87 175M100 153L102 175L108 200L112 227M80 172L80 190L93 213L107 227L113 228L133 207L157 180L177 160" stroke-width="2.800"/>
<path d="M97 177L147 182L187 193L220 203L235 210L239 215L257 217L286 230L302 243L322 255L351 278L367 288L388 308L408 323L424 340L433 345L449 353L473 373L486 378L498 390L522 403L547 423L563 438L600 462L620 480L640 492L653 502L670 515L690 527L717 543L740 562L780 578L810 599L867 625L883 640L923 655L940 665L960 667" stroke-width="3.800"/>
</g>
<rect x="962" y="652" width="107" height="144.500" fill="none" stroke="#ed1c24" stroke-width="5"/>
<text x="880" y="625" textLength="243" lengthAdjust="spacingAndGlyphs" style="font-size:16px;font-weight:bold;fill:#ed1c24">ALERT OK but Order dont filled</text>
</svg>
</body></html>
